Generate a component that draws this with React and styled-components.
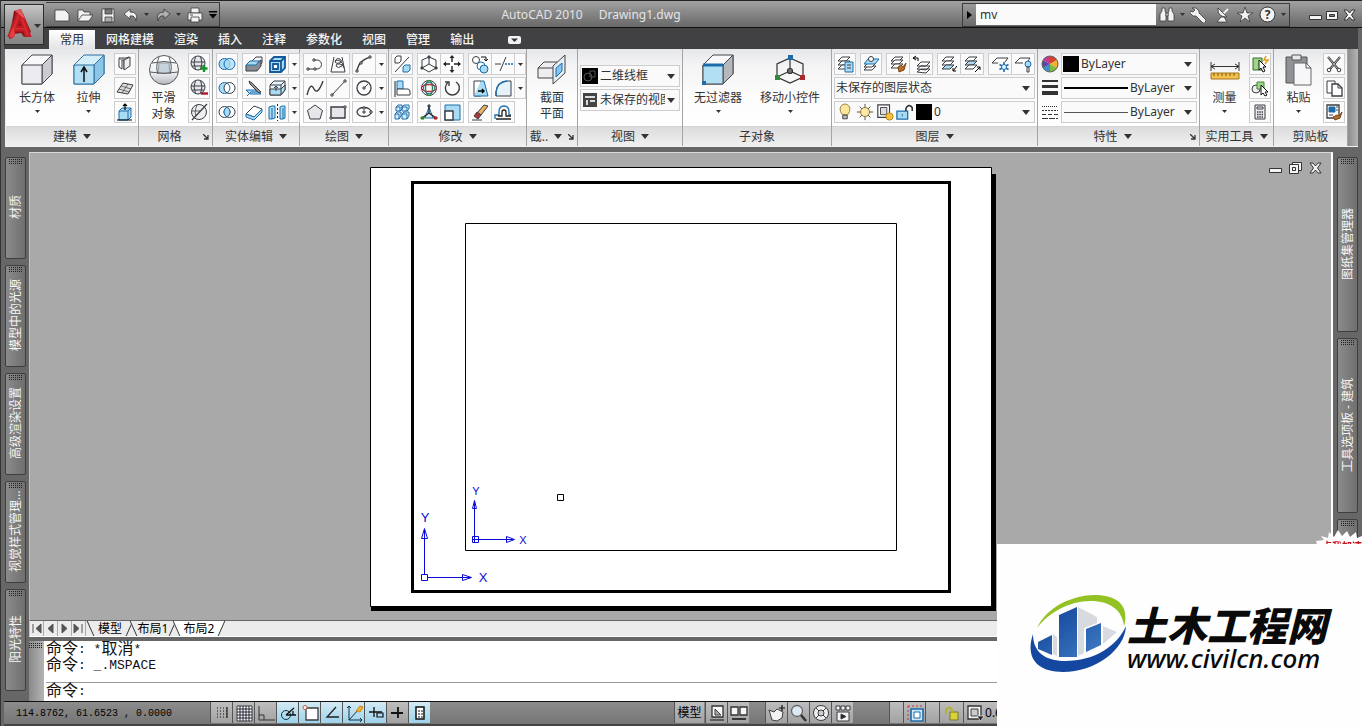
import React from 'react';
import styled, { createGlobalStyle } from 'styled-components';

const GlobalStyle = createGlobalStyle`
  *, *::before, *::after { box-sizing: border-box; }
  html, body { height: 100%; }
  body {
    margin: 0;
    background: #6a6a6a;
    font: 12px/16px "Noto Sans", "Noto Sans CJK SC", sans-serif;
    color: #333;
    overflow: hidden;
  }
  #root { height: 100%; }
  button, input, select {
    font: inherit;
    color: inherit;
    margin: 0;
    padding: 0;
    border: 0;
    background: none;
    border-radius: 0;
  }
  svg { display: block; flex: none; }
`;

const K = '#3a3d42';
const B = '#1c6cab';
const L = '#a9dbf4';

/* ---------- window frame ---------- */

const Window = styled.div`
  height: 100vh;
  min-height: 600px;
  display: flex;
  flex-direction: column;
  background: #676767;
  border-top: 1px solid #222;
  border-left: 1px solid #333;
`;

const TitleBar = styled.header`
  position: relative;
  height: 27px;
  flex: none;
  display: flex;
  align-items: center;
  padding: 1px 4px 0 45px;
  background: linear-gradient(#a2a2a2, #8a8a8a 40%, #686868);
  border-bottom: 1px solid #111;
`;

const AppButton = styled.button`
  position: absolute;
  left: 3px;
  top: 3px;
  width: 40px;
  height: 41px;
  border: 1px solid #2c2c2c;
  background: linear-gradient(#c6c6c6, #9a9a9a 50%, #858585);
  z-index: 2;
`;

const QuickAccess = styled.div`
  display: flex;
  align-items: center;
  width: 174px;
  height: 25px;
  padding-left: 4px;
  border: 1px solid #3b3b3b;
  border-left: 0;
`;

const QuickButton = styled.button`
  width: ${(p) => p.$w || 23}px;
  height: 22px;
  display: flex;
  align-items: center;
  justify-content: center;
`;

const Title = styled.h1`
  flex: 1;
  margin: 0;
  display: flex;
  justify-content: center;
  gap: 16px;
  font-size: 12px;
  font-weight: 400;
  color: #e4e4e4;
`;

const SearchBox = styled.form`
  display: flex;
  align-items: center;
  height: 24px;
  width: 328px;
  border: 1px solid #3b3b3b;
`;

const SearchInput = styled.input`
  width: 180px;
  height: 21px;
  padding: 0 4px;
  background: #fafafa;
  color: #333;
`;

const WindowButtons = styled.div`
  display: flex;
  gap: 4px;
  margin-left: 19px;
  width: 49px;
`;

const BareButton = styled.button`
  display: flex;
  align-items: center;
  justify-content: center;
`;

const TabRow = styled.nav`
  height: 21px;
  flex: none;
  display: flex;
  align-items: flex-end;
  margin: 0 4px 0 3px;
  padding-left: 45px;
  background: #414042;
`;

const RibbonTab = styled.button`
  height: 19px;
  padding: 0 ${(p) => (p.$active ? 11 : 10)}px;
  margin-right: ${(p) => (p.$active ? 1 : 0)}px;
  line-height: 19px;
  white-space: nowrap;
  font-weight: ${(p) => (p.$active ? 400 : 500)};
  color: ${(p) => (p.$active ? '#333' : '#f4f4f4')};
  background: ${(p) => (p.$active ? 'linear-gradient(#ffffff, #e4e4e4)' : 'none')};
`;

/* ---------- ribbon ---------- */

const Ribbon = styled.section`
  height: 98px;
  flex: none;
  display: flex;
  margin: 0 4px;
  padding-right: 10px;
  border-left: 1px solid #eee;
  border-bottom: 1px solid #f2f2f2;
  background: linear-gradient(90deg, #8d8d8d, #b4b4b4) right / 10px 100% no-repeat, #fafafa;
`;

const PanelBox = styled.section`
  width: ${(p) => p.$w}px;
  flex: ${(p) => (p.$grow ? '1 0 auto' : 'none')};
  display: flex;
  flex-direction: column;
  border-right: 1px solid #a4a4a4;
`;

const PanelBody = styled.div`
  flex: 1;
  display: flex;
  padding: 4px 0 0 ${(p) => p.$pad || 0}px;
  background: linear-gradient(#e6e7ea, #f4f4f5 22%, #fcfcfc 60%, #ffffff);
`;

const PanelFooter = styled.h2`
  margin: 0;
  height: 20px;
  display: flex;
  align-items: center;
  justify-content: center;
  position: relative;
  gap: 6px;
  padding-right: ${(p) => (p.$launcher ? 12 : 0)}px;
  border-top: 1px solid #d4d4d4;
  background: linear-gradient(#dcdcde, #f0f0f0);
  font-size: 12px;
  font-weight: 400;
  white-space: nowrap;
`;

const Launcher = styled.button`
  position: absolute;
  right: 3px;
  top: 7px;
`;

const BigButton = styled.button`
  width: ${(p) => p.$w}px;
  height: 70px;
  display: flex;
  flex-direction: column;
  align-items: center;
  white-space: nowrap;
  line-height: 16px;
`;

const BigIcon = styled.span`
  height: 37px;
  padding-top: 1px;
  display: flex;
  align-items: flex-start;
`;

const Caret = styled.span`
  margin-top: 4px;
`;

const Rows = styled.div`
  display: flex;
  flex-direction: column;
  gap: 2px;
  min-width: 0;
`;

const ViewRows = styled(Rows)`
  flex: 1;
  padding: 12px 2px 0 0;
`;

const LayerRows = styled(Rows)`
  flex: 1;
  padding-right: 2px;
`;

const Row = styled.div`
  display: flex;
  gap: ${(p) => p.$gap ?? 4}px;
`;

const Group = styled.div`
  display: flex;
`;

const Tool = styled.button`
  width: ${(p) => p.$w || 22}px;
  height: 22px;
  display: flex;
  align-items: center;
  justify-content: center;
  overflow: hidden;
  border: 1px solid #cdcdcf;
  background: #fbfbfb;
  & + & { margin-left: -1px; }
`;

const Combo = styled.label`
  position: relative;
  flex: ${(p) => (p.$h ? 'none' : 1)};
  min-width: 0;
  height: 22px;
  display: flex;
  align-items: center;
  padding-left: 1px;
  gap: 2px;
  border: 1px solid #cdcdcf;
  background: #fafafa;
  & > svg:last-child { position: absolute; right: 4px; top: 8px; }
`;

const Select = styled.select`
  flex: 1;
  min-width: 0;
  width: 0;
  height: 20px;
  margin-right: 14px;
  appearance: none;
  outline: none;
`;

const Swatch = styled.span`
  width: ${(p) => p.$s || 16}px;
  height: ${(p) => p.$s || 16}px;
  flex: none;
  background: #000;
`;

const LineSample = styled.span`
  width: 64px;
  height: ${(p) => p.$h}px;
  background: ${(p) => p.$c};
  margin-left: 1px;
`;

const RowIcon = styled.span`
  width: 22px;
  display: flex;
  align-items: center;
  justify-content: center;
`;

/* ---------- workspace ---------- */

const Workspace = styled.div`
  flex: 1;
  min-height: 0;
  display: flex;
  padding-top: 5px;
`;

const Dock = styled.aside`
  width: ${(p) => (p.$right ? 29 : 28)}px;
  flex: none;
  display: flex;
  flex-direction: column;
  gap: 6px;
  padding: 5px 4px 0;
  overflow: hidden;
`;

const DockTab = styled.button`
  height: ${(p) => p.$h}px;
  width: 21px;
  flex: none;
  display: flex;
  flex-direction: column;
  align-items: center;
  border: 1px solid #3e3e3e;
  border-radius: 2px;
  background: linear-gradient(90deg, #8b8b8b, #6f6f6f);
  color: #f6f6f6;
`;

const Grip = styled.span`
  width: 14px;
  height: 5px;
  flex: none;
  margin-top: 1px;
  background: repeating-linear-gradient(90deg, #222 0 1px, transparent 1px 2px) 0 0 / 14px 1px repeat-x,
    repeating-linear-gradient(90deg, #222 0 1px, transparent 1px 2px) 0 2px / 14px 1px repeat-x,
    repeating-linear-gradient(90deg, #222 0 1px, transparent 1px 2px) 0 4px / 14px 1px repeat-x;
`;

const DockText = styled.span`
  flex: 1;
  display: flex;
  align-items: center;
  justify-content: center;
  padding-top: 8px;
  writing-mode: vertical-rl;
  text-orientation: sideways;
  transform: rotate(180deg);
  white-space: nowrap;
`;

const Main = styled.main`
  flex: 1;
  min-width: 0;
  display: flex;
  flex-direction: column;
`;

const Canvas = styled.div`
  position: relative;
  flex: 1;
  min-height: 0;
  display: flex;
  justify-content: center;
  padding: 14px 0 0 5px;
  overflow: hidden;
  background: #a9a9a9;
  border-top: 1px solid #d8d8d8;
  border-left: 1px solid #c4c4c4;
  border-right: 2px solid #fff;
`;

const DocButtons = styled.div`
  position: absolute;
  top: 9px;
  right: 9px;
  display: flex;
  gap: 7px;
`;

const LayoutBar = styled.div`
  height: 17px;
  flex: none;
  display: flex;
  background: #ececec;
  border-top: 1px solid #666;
  border-bottom: 1px solid #fff;
  border-left: 1px solid #c4c4c4;
`;

const NavButton = styled.button`
  width: 14px;
  height: 15px;
  display: flex;
  align-items: center;
  justify-content: center;
  border-right: 1px solid #aaa;
`;

const LayoutTab = styled.button`
  position: relative;
  width: ${(p) => p.$w}px;
  margin-right: -5px;
  height: 15px;
  line-height: 15px;
  color: #000;
  z-index: ${(p) => (p.$active ? 2 : 1)};
  &::before, &::after {
    content: "";
    position: absolute;
    top: 0;
    bottom: 0;
    width: 60%;
    background: ${(p) => (p.$active ? '#fff' : '#ececec')};
  }
  &::before { left: 4px; border-left: 1px solid #333; transform: skewX(24deg); }
  &::after { right: 4px; border-right: 1px solid #333; transform: skewX(-24deg); }
  & > span { position: relative; z-index: 1; }
`;

const CommandArea = styled.div`
  height: 60px;
  flex: none;
  display: flex;
  margin-top: 4px;
  background: #fff;
`;

const CommandGrip = styled.div`
  width: 15px;
  flex: none;
  padding-top: 1px;
  background: linear-gradient(90deg, #8a8a8a, #b4b4b4);
`;

const CommandLog = styled.div`
  flex: 1;
  display: flex;
  flex-direction: column;
  padding: 1px 0 0 2px;
  font: 13px/16px "Liberation Mono", "Noto Sans CJK SC", monospace;
  color: #111;
`;

const LogLine = styled.div`
  height: 16px;
  display: flex;
  align-items: center;
  white-space: pre;
`;

const Prompt = styled.label`
  height: 19px;
  display: flex;
  align-items: center;
  margin-top: 8px;
  border-top: 1px solid #9a9a9a;
  input { flex: 1; outline: none; }
`;

const Han = styled.span`
  font-size: 16px;
`;

/* ---------- status bar ---------- */

const StatusBar = styled.footer`
  height: 25px;
  flex: none;
  display: flex;
  margin-left: 3px;
  padding-right: 359px;
  border-top: 1px solid #111;
  border-bottom: 2px solid #444;
  background: linear-gradient(#8c8c8c, #757575);
`;

const Coordinates = styled.output`
  width: 206px;
  padding-left: 12px;
  font: 10px/23px "Liberation Mono", monospace;
  color: #000;
  white-space: pre;
`;

const StatusButton = styled.button`
  width: ${(p) => p.$w || 22}px;
  height: 21px;
  display: flex;
  align-items: center;
  justify-content: center;
  white-space: nowrap;
  color: #000;
  border-left: 1px solid #555;
  background: ${(p) => (p.$on ? 'linear-gradient(#d4eaf4, #9cd3ea)' : 'linear-gradient(#bdbdbd, #a2a2a2)')};
`;

const StatusGroup = styled.div`
  display: flex;
  margin-left: ${(p) => p.$ml}px;
`;

const Spacer = styled.div`
  flex: 1;
`;

/* ---------- site banner ---------- */

const Banner = styled.a`
  position: fixed;
  right: 0;
  bottom: 0;
  width: 365px;
  height: 182px;
  z-index: 10;
  display: flex;
  align-items: center;
  padding: 0 0 2px 32px;
  background: #fefefe;
  color: #0a0a0a;
  text-decoration: none;
`;

const BannerText = styled.span`
  display: flex;
  flex-direction: column;
  padding-top: 8px;
  white-space: nowrap;
`;

const BannerName = styled.strong`
  font: italic 900 40px/40px "Noto Sans CJK SC", sans-serif;
`;

const BannerUrl = styled.span`
  font: italic 500 26px/28px "Noto Sans", sans-serif;
`;

const Badge = styled.span`
  position: fixed;
  right: 0;
  bottom: 172px;
  z-index: 9;
`;

/* ---------- drawings ---------- */

const quad = (y, fill = '#fff') => <path d={`M3 ${y + 4}L7 ${y}H15L11 ${y + 4}Z`} fill={fill} />;

const ICONS = {
  polysolid: <g><path d="M4 4v9l3 2V6z" fill="#fff" /><path d="M4 4h7l3-1v9l-5 3V6H7" fill="#ddd" /><path d="M9 6v10l6-4V3z" fill="#eee" /></g>,
  planar: <g><path d="M2 14L8 5l10 2-5 9z" fill="#ddd" /><path d="M6 8l10 3M4 11l10 3M13 6L7 15" strokeWidth=".7" /></g>,
  presspull: <g><path d="M4 9l3-3h9v9l-3 3H4z" fill={L} stroke={B} /><path d="M4 9h9v9M13 9l3-3" stroke={B} /><path d="M2 18h15M10 8V2M8 4l2-2 2 2" stroke="#000" strokeWidth="1.200" /></g>,
  smoothMore: <g><circle cx="9" cy="9" r="7" fill="#e6e6ea" /><path d="M2 8h14M3 12h12M6.500 2.500q-3 6 0 13M11.500 2.500q3 6 0 13" /><path d="M15 11v7M11.500 14.500h7" stroke="#16922b" strokeWidth="2.400" /></g>,
  smoothLess: <g><circle cx="9" cy="9" r="7" fill="#e6e6ea" /><path d="M2 8h14M3 12h12M6.500 2.500q-3 6 0 13M11.500 2.500q3 6 0 13" /><path d="M12 15.500h7" stroke="#b0152a" strokeWidth="2.400" /></g>,
  refine: <g><circle cx="10" cy="10" r="7.500" fill="#eee" /><path d="M3 18L18 2" strokeWidth="1.300" /><path d="M3 9h8M8 3q-3 7-1 11" strokeWidth=".8" /></g>,
  union: <g stroke={B}><circle cx="7.500" cy="10" r="5.500" fill={L} /><circle cx="12.500" cy="10" r="5.500" fill={L} fillOpacity=".7" /></g>,
  subtract: <g><circle cx="7.500" cy="10" r="5.500" fill={L} stroke={B} /><circle cx="12.500" cy="10" r="5.500" fill="#fff" /><path d="M10 5.100a5.500 5.500 0 010 9.800" stroke={B} /></g>,
  intersect: <g><circle cx="7.500" cy="10" r="5.500" /><circle cx="12.500" cy="10" r="5.500" /><path d="M10 5.100a5.500 5.500 0 010 9.800 5.500 5.500 0 010-9.800z" fill={L} stroke={B} /></g>,
  interfere: <g><path d="M8 7l4-4h6v6l-4 4H8z" fill="#f2f6fa" /><path d="M2 11l3-3h9l3-2v6l-4 5H2z" fill="#888c90" /><path d="M2 11l4-4h9l-3 4z" fill={L} stroke={B} /></g>,
  slice: <g><path d="M2 12h9l6 4H6z" fill={L} stroke={B} /><path d="M5 3l3 2 9 9-2 1-9-9z" fill="#999" /><path d="M3 18l4-4h7" stroke={B} /></g>,
  thicken: <g><path d="M2 12l8-8 8 3-8 8z" fill="#fff" /><path d="M2 12v3l8 3 8-8V7l-8 8z" fill={L} stroke={B} /></g>,
  shell: <g stroke="#135a9a" strokeWidth="1.800"><path d="M3 7l4-4h11v11l-4 4H3z" fill={L} /><path d="M3 7h11v11M14 7l4-4" /><path d="M6 10h5v5H6z" fill="#fff" /></g>,
  imprint: <g><path d="M3 7l4-4h11v9l-4 5H3z" fill="#e5f4fc" /><path d="M3 11h11l4-4v5l-4 5H3z" fill={L} /><path d="M3 7h11v10M14 7l4-4M9 13V8M7 10l2-2 2 2" /></g>,
  separate: <g stroke={B}><path d="M2 5l3-1h3v12l-3 1H2zM13 5l2-1h3v12l-2 1h-3z" fill={L} /><path d="M5 6v11M16 6v11" /><path d="M10.500 2v17" stroke="#222" strokeDasharray="2 2" /></g>,
  polyline: <g><path d="M3 15h9a4.500 4.500 0 000-9H9" /><path d="M2 14h2v2H2zM9 14h2v2H9zM8 5h2v2H8z" fill="#fff" /></g>,
  helix: <g><path d="M6 3L3 18h14L14 3" /><path d="M7 7q2-4 5-2t0 4q-4 1-5-1 1-3 5-1t2 5q-4 3-6 0 0-3 4-2t4 4" /></g>,
  arc: <g><path d="M3 18Q4 6 17 3" strokeWidth="1.300" /><path d="M2 16h2v2H2zM6 8h2v2H6zM15 2h2v2h-2z" fill="#fff" /></g>,
  spline: <path d="M2 17C5 6 7 7 9 11S14 14 18 3" strokeWidth="1.400" />,
  line: <g><path d="M4 17L17 3" /><path d="M3 16h2v2H3zM16 2h2v2h-2z" fill="#fff" /></g>,
  circle: <g><circle cx="10" cy="10" r="7" strokeWidth="1.300" /><path d="M10 10l4-4" /><path d="M9 9h2v2H9z" fill="#fff" /></g>,
  polygon: <path d="M10 3l7.500 5.500L15 17H5L2.500 8.500z" fill="#e6e6ea" />,
  rectangle: <g><path d="M3 5h14v11H3z" fill="#e6e6ea" strokeWidth="1.400" /><path d="M2 15h2v2H2zM16 4h2v2h-2z" fill="#fff" /></g>,
  ellipse: <g><ellipse cx="10" cy="10" rx="7" ry="4.500" strokeWidth="1.300" /><path d="M9 9h2v2H9zM16 9h2v2h-2zM9 5h2v2H9z" fill="#fff" /></g>,
  align3d: <g><path d="M3 4l2-2h4v5L7 9H3z" fill="#fff" /><path d="M3 18L17 3" /><path d="M11 13l2-2h5v5l-2 2h-5z" fill={L} stroke={B} /></g>,
  gizmo: <g><path d="M10 3l7 3v8l-7 4-7-4V6zM10 10V3M10 10l7 4M10 10l-7 4" /><path d="M9 2h2v2H9z" fill={B} /><path d="M16 13h2v2h-2z" fill="#a22" /><path d="M2 13h2v2H2z" fill="#282" /></g>,
  move: <g><path d="M10 3v5M10 12v5M3 10h5M12 10h5" stroke="#222" strokeWidth="1.400" /><path d="M10 1l2.500 3h-5zM10 19l2.500-3h-5zM1 10l3-2.500v5zM19 10l-3-2.500v5z" fill="#222" stroke="none" /></g>,
  copy: <g><circle cx="6" cy="6" r="3.500" fill="#fff" /><circle cx="11" cy="12" r="4" fill="#fff" stroke={B} /><circle cx="14" cy="15" r="4" fill={L} stroke={B} /><path d="M11 3h5v4M14 5l2 2 2-2" stroke="#111" /></g>,
  trim: <g><path d="M2 10h6M7 17L13 3" /><path d="M12 10h8" stroke={B} strokeDasharray="2 1" strokeWidth="1.300" /></g>,
  alignTool: <g><path d="M3 3v16" stroke="#222" /><path d="M5 3h6v8H5z" fill={L} stroke={B} /><path d="M5 11h11q2 0 2 3v3H5z" fill="#fff" /></g>,
  orbit: <g><circle cx="10" cy="10" r="7.500" /><ellipse cx="10" cy="10" rx="3.500" ry="7.500" stroke="#2a8a3a" strokeWidth="1.300" /><ellipse cx="10" cy="10" rx="7.500" ry="3.500" stroke="#b33" strokeWidth="1.300" /><circle cx="10" cy="10" r="5.500" stroke={B} /></g>,
  rotate: <g><path d="M6 4.500a7 7 0 108-.5" strokeWidth="1.400" /><path d="M3 4h4v4" strokeWidth="1.400" /></g>,
  stretch: <g><path d="M4 3h7v15H4z" fill="#fff" /><path d="M11 3h3l4 15H4" fill={L} stroke={B} /><path d="M8 13h6M12 11l2 2-2 2" stroke="#000" strokeWidth="1.400" /></g>,
  fillet: <g><path d="M3 18V14Q4 4 14 3h4v15z" fill="#e6f2fa" /><path d="M3 18V14Q4 4 14 3" stroke={B} strokeWidth="1.400" /></g>,
  array: <g stroke={B}><path d="M4 5l2-2h4v4L8 9H4zM10 5l2-2h5v4l-2 2h-5zM3 12l2-2h4v4l-2 3H3zM10 12l2-2h5v4l-2 3h-5z" fill="#d6eefa" /><path d="M4 5h4v4M10 5h5v4M3 12h4v5M10 12h5v5" /></g>,
  gizmo3: <g><path d="M10 5L6 16h8z" fill="#d6eefa" stroke={B} /><path d="M10 11V4M10 11l7 5M10 11l-7 5" stroke="#222" strokeWidth="1.300" /><path d="M9 3h2v2H9z" fill={B} /><path d="M15 15h3v2h-3z" fill="#a22" stroke="#a22" /><path d="M2 15h3v2H2z" fill="#282" stroke="#282" /></g>,
  scale: <g><path d="M3 3h15v15H3z" fill={L} stroke={B} /><path d="M3 9h8v9H3z" fill="#fff" strokeWidth="1.400" /></g>,
  erase: <g><path d="M7 11l7-8 4 1-7 9z" fill="#e8b063" /><path d="M4 14l3-4 4 3-3 4z" fill="#b4343c" /><path d="M2 18h10" /></g>,
  offset: <g strokeWidth="1.300"><path d="M2 17v-4h4v-3q0-6 5-6t5 6v3h2" stroke={B} /><path d="M3 17h15M5 14h4v-4q0-2 2-2t2 2v4h5" stroke="#222" /></g>,
  layerProps: <g>{quad(3)}{quad(7)}{quad(11)}<path d="M10 8h8v10h-8z" fill={L} stroke={B} /><path d="M12 11h4M12 14h4" /></g>,
  layerCurrent: <g>{quad(12)}{quad(9)}<path d="M3 10l4-5h11l-4 5z" fill={L} stroke={B} /><circle cx="10" cy="5" r="2.500" fill="#fff" /></g>,
  layerMatch: <g>{quad(3)}{quad(6)}{quad(10)}<path d="M10 13l3-2 2 2 3-4-2 7-5 2z" fill="#b4702a" stroke="#7c4514" /></g>,
  layerPrev: <g><path d="M6 12l4-4h9l-4 4zM6 15l4-3h9l-4 4zM6 18l4-3h9l-4 4z" fill="#fff" /><path d="M2 4h5v3M5 2L2 4l3 2" stroke="#000" /></g>,
  layerIso: <g>{quad(3)}{quad(7)}{quad(11, L)}<path d="M18 12l-4 5M14 14v3h3" stroke="#000" /></g>,
  layerUniso: <g>{quad(3)}{quad(7, L)}{quad(11)}<path d="M13 18l5-5M15 13h3v3" stroke="#000" /></g>,
  layerFreeze: <g><path d="M2 9l5-5h11l-3 4" fill="#fff" /><path d="M2 9h6" /><path d="M14 8v10M9.500 10.500l9 5M18.500 10.500l-9 5" stroke={B} strokeWidth="1.600" /><circle cx="14" cy="13" r="2.500" fill="#e6f6ff" stroke={B} /></g>,
  layerOff: <g><path d="M2 9l5-5h10l-2 3" fill="#fff" /><path d="M2 9h8" /><circle cx="15" cy="10" r="3" fill={L} stroke={B} /><path d="M14 13h2v5h-2z" fill="#fff" /></g>,
  select: <g><path d="M3 4h9v12H3z" fill="#9ed686" stroke="#3b6b2d" /><path d="M16 2l-2 4h4l-3 4" stroke="#e0a01c" strokeWidth="1.600" /><path d="M9 6v10l2-2 2 4 2-1-2-4h3z" fill="#fff" stroke="#111" /></g>,
  selectAll: <g><circle cx="6" cy="11" r="4" fill="#eee" /><path d="M7 4h7v7H7z" fill="#9ed686" stroke="#3b8b2d" /><path d="M11 7v10l2-2 2 3 2-1-2-3h3z" fill="#fff" stroke="#111" /></g>,
  calc: <g><path d="M5 3h10v14H5z" fill="#eee" /><path d="M7 5h6v2H7z" fill="#fff" /><path d="M7 10h6M7 12.500h6M7 15h6" strokeDasharray="1.500 .8" strokeWidth="1.500" /></g>,
  cut: <g><path d="M4 3l10 12M16 3L6 15" stroke="#333" strokeWidth="2.200" /><path d="M4 3l10 12M16 3L6 15" stroke="#eee" strokeWidth=".7" /><circle cx="5" cy="16" r="1.800" /><circle cx="15" cy="16" r="1.800" /></g>,
  duplicate: <g><path d="M3 3h8v12H3z" fill="#fff" /><path d="M8 6h6l4 4v8H8z" fill="#fff" strokeWidth="1.300" /><path d="M14 6v4h4" /></g>,
  matchProps: <g><path d="M3 3h12v13H3z" fill="#fff" strokeWidth="1.300" /><path d="M5 5h6v5H5z" fill={B} stroke={B} /><path d="M12 5h2M12 8h2M5 13h4" /><path d="M9 15l4-2 2 1 3-4-2 6-5 2z" fill="#b4702a" stroke="#7c4514" /></g>,
  snap: <g stroke="#111" strokeDasharray="1 2"><path d="M5 5h10M5 8h10M5 11h10M5 14h10" /><path d="M15 4v11" strokeDasharray="none" /></g>,
  grid: <g><path d="M3 3h15v15H3z" fill="#fff" /><path d="M6 3v15M9 3v15M12 3v15M15 3v15M3 6h15M3 9h15M3 12h15M3 15h15" stroke="#223" /></g>,
  ortho: <path d="M3 3v14h16M3 12h5v5" stroke="#333" />,
  polar: <g><circle cx="8" cy="12" r="4.500" stroke="#134" /><path d="M8 12h10M8 12l8-7M15 8v4" stroke="#111" strokeWidth="1.300" /></g>,
  osnap: <g><path d="M6 5h12v12H6z" fill="#fff" strokeWidth="1.300" /><circle cx="5" cy="4.500" r="2" fill="#fff" stroke="#c53" /></g>,
  track: <path d="M14 4L5 14h12" stroke="#222" strokeWidth="1.300" />,
  ducs: <g><path d="M5 3v14h13M5 17L15 6M3 5l2-2 2 2M16 15l2 2-2 2" stroke="#134" /><path d="M16 3l-4 5 4 1 3-5z" fill="#f3b431" stroke="#c98514" /></g>,
  dyn: <g stroke="#111"><path d="M3 9h13M8 4v10" strokeWidth="1.300" /><path d="M11 10h6v4h-6z" fill={L} strokeWidth="1.200" /></g>,
  lwt: <path d="M3 10h12M10 4v11" stroke="#111" strokeWidth="1.800" />,
  qp: <g><path d="M6 4h8v12H6z" fill="#fff" stroke="#111" strokeWidth="1.500" /><path d="M8 8h2M11 8h2M8 11h2M11 11h2M8 14h2M11 14h2" stroke="#111" /></g>,
  modelSpace: <g><path d="M5 3h11v11H5z" fill="#f6f6f6" stroke="#333" strokeWidth="1.300" /><path d="M8 6v6h6z" fill="#aaa" /><path d="M3 17h14" stroke="#111" /></g>,
  layouts: <g><path d="M2 4h7v8H2zM11 4h7v8h-7z" fill="#f6f6f6" stroke="#333" strokeWidth="1.300" /><path d="M3 16h14" stroke="#111" strokeWidth="1.500" /></g>,
  pan: <g><path d="M2 7l5 2 3-3 2 1 4 2-1 6-5 3-5-1z" fill="#f2f2f2" /><path d="M15 2v6M12 5h6" stroke="#111" strokeWidth="1.200" /></g>,
  zoomIcon: <g><circle cx="8" cy="8" r="5.500" fill="#dce8f4" stroke="#666" strokeWidth="1.300" /><path d="M12 12l5 6" stroke="#333" strokeWidth="2.500" /></g>,
  wheel: <g><circle cx="10" cy="10" r="7.500" fill="#eee" /><circle cx="10" cy="10" r="3" fill="#ccc" /><path d="M5 5l3 3M15 5l-3 3M5 15l3-3M15 15l-3-3" /></g>,
  motion: <g><path d="M3 3h4v4H3zM8 3h4v4H8zM13 3h4v4h-4zM4 9h12v9H4z" fill="#f2f2f2" /><path d="M8 11v5l5-2.500z" fill="#222" /></g>,
  annoScale: <g><path d="M3 3v16M3 3h16" stroke="#c33" strokeDasharray="2 2" /><path d="M6 6h12v12H6z" fill="#cfe6f8" stroke={B} strokeWidth="1.600" /><path d="M9 9h6v6H9z" fill="#fff" stroke={B} /></g>,
  lock: <g><path d="M8 9h8v8H8z" fill="#d8d337" stroke="#77762a" /><path d="M4 11V7q3-5 6 0v2" stroke="#b5b22e" strokeWidth="2" /></g>,
  screen: <g><path d="M3 3h13v13H3z" fill="#f2f2f2" stroke="#333" strokeWidth="1.300" /><path d="M6 6h7v7H6z" fill="#ccc" /><path d="M12 13h7l-3.500 5z" fill="#222" stroke="#fff" strokeWidth=".6" /></g>,
  bulb: <g><path d="M7 13q-5-7 0-11 3-2 6 0 5 4 0 11z" fill="#fbe69a" stroke="#8a7a3a" /><path d="M7.500 13.500h5v4h-5z" fill="#bbb" /></g>,
  sun: <g><path d="M10 1v18M1 10h18M4 4l12 12M16 4L4 16" stroke="#444" /><circle cx="10" cy="10" r="5" fill="#fbe9a8" stroke="#8a6a2a" /></g>,
  vpFreeze: <g><path d="M2 2h13v14H2z" fill="#fff" strokeWidth="1.300" /><path d="M5 5h7v8H5z" fill="#ddd" /><circle cx="15" cy="15" r="4" fill="#f6c33d" stroke="#b97a12" /></g>,
  unlock: <g><path d="M1 9h12v9H1z" fill={L} stroke={B} strokeWidth="1.400" /><path d="M11 9V6q3-6 7-1v4" stroke="#222" strokeWidth="1.600" /><path d="M7 12v3" stroke={B} /></g>,
};

function Icon({ name, size = 20 }) {
  return (
    <svg width={size} height={size} viewBox="0 0 20 20" fill="none" stroke={K} strokeWidth="1" aria-hidden="true">
      {ICONS[name]}
    </svg>
  );
}

function Arrow({ small }) {
  return small ? (
    <svg width="5" height="3" viewBox="0 0 5 3"><path d="M0 0h5L2.500 3z" fill="#333" /></svg>
  ) : (
    <svg width="8" height="5" viewBox="0 0 8 5"><path d="M0 0h8L4 5z" fill="#333" /></svg>
  );
}

const glyphStroke = { stroke: '#3a3a3a', strokeWidth: 0.8, fill: '#f2f2f2' };

const QuickIcon = {
  new: <path d="M1 3h10l4 4v7H1z" {...glyphStroke} />,
  open: <g {...glyphStroke}><path d="M1 14V3h5l1 2h6v3" /><path d="M1 14l4-6h11l-4 6z" /></g>,
  save: <g {...glyphStroke}><path d="M2 2h12v13H2z" /><path d="M5 2h7v5H5z" fill="#777" /><path d="M5 10h7v5H5z" fill="#aaa" /></g>,
  undo: <path d="M7 2L1 7l6 5V9q5-1 6 5 3-9-6-9z" {...glyphStroke} />,
  redo: <path d="M9 2l6 5-6 5V9Q4 8 3 14 0 5 9 5z" {...glyphStroke} fill="#b0b0b0" />,
  print: <g {...glyphStroke}><path d="M4 1h8v5H4z" /><path d="M1 6h14v7H1z" /><path d="M4 10h8v5H4z" /><path d="M3 8h3" stroke="#222" /></g>,
  find: <g {...glyphStroke}><path d="M3 1h3v3l1 2v8H1V7l2-3zM10 1h3v3l2 3v7H9V6l1-2z" /><path d="M7 6h2v3H7z" /></g>,
  key: <path d="M2 1h4l3 3v2l7 7-1 3h-2L6 9H3L0 6V4l3 1 2-2z" {...glyphStroke} />,
  dish: <g {...glyphStroke}><path d="M9 7l5-5" stroke="#f2f2f2" strokeWidth="1.800" /><path d="M4 1Q3 10 13 10L4 1z" /><path d="M7 10l-4 5h10l-3-5z" /></g>,
  star: <path d="M8 0l2 6h6l-5 3 2 6-5-4-5 4 2-6-5-3h6z" {...glyphStroke} />,
};

function Quick({ name, label, w }) {
  return (
    <QuickButton type="button" $w={w} aria-label={label}>
      <svg width="16" height="16" viewBox="0 0 16 16">{QuickIcon[name]}</svg>
    </QuickButton>
  );
}

function BoxIcon({ blue, filter }) {
  return (
    <svg width="32" height="32" viewBox="0 0 32 32" fill="none" stroke={blue ? '#2e6f9c' : '#44474c'}>
      <path d="M1 11L11 1h20v19L21 30H1z" fill={blue ? '#d4edf9' : '#f8f8fa'} />
      <path d="M21 11L31 1v19L21 30z" fill={blue ? '#8cc6e6' : filter ? '#b4b7bc' : '#cbccd2'} />
      <path d="M1 11h20v19H1z" fill={blue || filter ? '#b2dff4' : '#ebebf0'} />
      {blue && <path d="M11 28V14M8 18l3-5 3 5" stroke="#111" strokeWidth="1.500" />}
      {filter && <g><path d="M1 11h20" stroke={B} strokeWidth="3" /><path d="M0 27h4v4H0z" fill={B} stroke="none" /></g>}
    </svg>
  );
}

function SphereIcon() {
  return (
    <svg width="32" height="32" viewBox="0 0 32 32" fill="none" stroke="#555a60">
      <defs><linearGradient id="ball" x1="0" y1="0" x2="0" y2="1"><stop offset="0" stopColor="#fff" /><stop offset=".6" stopColor="#eeeff2" /><stop offset="1" stopColor="#b4b6bc" /></linearGradient></defs>
      <circle cx="16" cy="16" r="14.500" fill="url(#ball)" />
      <path d="M11 9h10l1 10H10z" fill="#a9bccb" opacity=".6" />
      <path d="M4 9q12-3 24 0M2 18q14 3 28 0M11 3q-4 10-1 17M21 3q4 10 1 17" />
    </svg>
  );
}

function SectionIcon() {
  return (
    <svg width="30" height="32" viewBox="0 0 30 32" fill="none" stroke="#444">
      <path d="M1 14l6-6h14v11l-4 5H1z" fill="#eeeef2" />
      <path d="M1 14h15" />
      <path d="M16 12L28 1v18L16 30z" fill="#e4eef4" />
      <path d="M19 14l6-5v8l-6 6z" fill="#84c5ea" stroke={B} />
    </svg>
  );
}

function MoveGizmoIcon() {
  return (
    <svg width="32" height="32" viewBox="0 0 32 32" fill="none" stroke="#333" strokeWidth="1.200">
      <path d="M16 4l13 6v13l-13 6-13-6V10zM16 4v13l13 6M16 17L3 23" />
      <path d="M14 1h5v5h-5z" fill={B} stroke="none" /><path d="M26 21h5v5h-5z" fill="#a92a2a" stroke="none" />
      <path d="M1 21h5v5H1z" fill="#2c8a38" stroke="none" /><circle cx="16" cy="17" r="2.500" fill="#777" />
    </svg>
  );
}

function MeasureIcon() {
  return (
    <svg width="30" height="32" viewBox="0 0 30 32" fill="none" stroke="#333">
      <path d="M1 8v9M29 8v9M1 12.500h28M5 10l-4 2.500L5 15M25 10l4 2.500L25 15" />
      <path d="M1 19h28v6H1z" fill="#f2c14e" stroke="#a5761c" /><path d="M4 19v3M8 19v3M12 19v3M16 19v3M20 19v3M24 19v3" stroke="#7a5412" />
    </svg>
  );
}

function PasteIcon() {
  return (
    <svg width="27" height="32" viewBox="0 0 27 32" fill="none" stroke="#555">
      <path d="M1 3h21v26H1z" fill="#8f9296" /><path d="M7 1h9v5H7z" fill="#e8e8e8" />
      <path d="M9 9h12l5 5v17H9z" fill="#f7f7f9" stroke="#666" /><path d="M21 9v5h5" />
    </svg>
  );
}

function ColorWheel() {
  const hues = ['#d8402e', '#f0b02c', '#7dbb3c', '#3f8fc8', '#5a48a8', '#c23a8a'];
  const pts = [[9, 1], [16, 5], [16, 13], [9, 17], [2, 13], [2, 5]];
  return (
    <svg width="18" height="18" viewBox="0 0 18 18">
      {hues.map((c, i) => {
        const [x, y] = pts[i];
        const [u, v] = pts[(i + 1) % 6];
        return <path key={c} d={`M9 9L${x} ${y}A8 8 0 01${u} ${v}Z`} fill={c} />;
      })}
      <circle cx="9" cy="9" r="8" fill="none" stroke="#666" />
    </svg>
  );
}

function Panel({ title, w, pad, arrow, launcher, grow, children }) {
  return (
    <PanelBox $w={w} $grow={grow}>
      <PanelBody $pad={pad}>{children}</PanelBody>
      <PanelFooter $launcher={launcher}>
        {title}
        {arrow && <Arrow />}
        {launcher && (
          <Launcher type="button" aria-label={`${title} 设置`}>
            <svg width="6" height="6" viewBox="0 0 6 6"><path d="M0 0l5 5M5 1v4H1" stroke="#333" fill="none" strokeWidth="1.300" /></svg>
          </Launcher>
        )}
      </PanelFooter>
    </PanelBox>
  );
}

function Big({ icon, lines, w, arrow }) {
  return (
    <BigButton type="button" $w={w}>
      <BigIcon>{icon}</BigIcon>
      {lines.map((t) => <span key={t}>{t}</span>)}
      {arrow && <Caret><Arrow small /></Caret>}
    </BigButton>
  );
}

function Tools({ items, w }) {
  return (
    <Group>
      {items.map((n, i) => n === 'v'
        ? <Tool key={i} type="button" $w={12} aria-label="更多"><Arrow small /></Tool>
        : <Tool key={i} type="button" $w={w} aria-label={n}><Icon name={n} /></Tool>)}
    </Group>
  );
}

function Dropdown({ label, value, children, fixed }) {
  return (
    <Combo $h={fixed}>
      {children}
      <Select aria-label={label} defaultValue={value}><option>{value}</option></Select>
      <Arrow />
    </Combo>
  );
}

const TABS = ['常用', '网格建模', '渲染', '插入', '注释', '参数化', '视图', '管理', '输出'];

function RibbonPanels() {
  return (
    <Ribbon>
      <Panel title="建模" w={133} pad={5} arrow>
        <Big icon={<BoxIcon />} lines={['长方体']} w={52} arrow />
        <Big icon={<BoxIcon blue />} lines={['拉伸']} w={51} arrow />
        <Rows><Tools items={['polysolid']} /><Tools items={['planar']} /><Tools items={['presspull']} /></Rows>
      </Panel>
      <Panel title="网格" w={74} pad={0} launcher>
        <Big icon={<SphereIcon />} lines={['平滑', '对象']} w={49} />
        <Rows><Tools items={['smoothMore']} /><Tools items={['smoothLess']} /><Tools items={['refine']} /></Rows>
      </Panel>
      <Panel title="实体编辑" w={87} pad={3} arrow>
        <Rows>
          <Row><Tools items={['union']} /><Tools items={['interfere', 'shell', 'v']} w={24} /></Row>
          <Row><Tools items={['subtract']} /><Tools items={['slice', 'imprint', 'v']} w={24} /></Row>
          <Row><Tools items={['intersect']} /><Tools items={['thicken', 'separate', 'v']} w={24} /></Row>
        </Rows>
      </Panel>
      <Panel title="绘图" w={89} pad={3} arrow>
        <Rows>
          <Row $gap={2}><Tools items={['polyline', 'helix']} w={24} /><Tools items={['arc', 'v']} w={24} /></Row>
          <Row $gap={2}><Tools items={['spline', 'line']} w={24} /><Tools items={['circle', 'v']} w={24} /></Row>
          <Row $gap={2}><Tools items={['polygon', 'rectangle']} w={24} /><Tools items={['ellipse', 'v']} w={24} /></Row>
        </Rows>
      </Panel>
      <Panel title="修改" w={138} pad={2} arrow>
        <Rows>
          <Row><Tools items={['align3d']} /><Tools items={['gizmo', 'move']} w={24} /><Tools items={['copy', 'trim', 'v']} w={24} /></Row>
          <Row><Tools items={['alignTool']} /><Tools items={['orbit', 'rotate']} w={24} /><Tools items={['stretch', 'fillet', 'v']} w={24} /></Row>
          <Row><Tools items={['array']} /><Tools items={['gizmo3', 'scale']} w={24} /><Tools items={['erase', 'offset']} w={24} /></Row>
        </Rows>
      </Panel>
      <Panel title="截.." w={51} arrow launcher>
        <Big icon={<SectionIcon />} lines={['截面', '平面']} w={50} />
      </Panel>
      <Panel title="视图" w={105} pad={2} arrow>
        <ViewRows>
          <Dropdown label="视觉样式" value="二维线框" fixed>
            <svg width="16" height="16" viewBox="0 0 16 16" fill="none" stroke="#555"><path d="M0 0h16v16H0z" fill="#000" stroke="none" /><circle cx="6" cy="9" r="4" /><path d="M8 3h5v6H8z" /></svg>
          </Dropdown>
          <Dropdown label="视图" value="未保存的视图" fixed>
            <svg width="16" height="16" viewBox="0 0 16 16"><path d="M1 1h14v14H1z" fill="#444" /><path d="M3 4h10v2H3zM4 8h2v5H4zM8 8h5v2H8z" fill="#ddd" /></svg>
          </Dropdown>
        </ViewRows>
      </Panel>
      <Panel title="子对象" w={149}>
        <Big icon={<BoxIcon filter />} lines={['无过滤器']} w={70} arrow />
        <Big icon={<MoveGizmoIcon />} lines={['移动小控件']} w={74} arrow />
      </Panel>
      <Panel title="图层" w={206} pad={2} arrow>
        <LayerRows>
          <Row>
            <Tools items={['layerProps']} /><Tools items={['layerCurrent']} /><Tools items={['layerMatch', 'layerPrev']} w={24} />
            <Tools items={['layerIso', 'layerUniso']} w={24} /><Tools items={['layerFreeze', 'layerOff']} w={24} />
          </Row>
          <Dropdown label="图层状态" value="未保存的图层状态" fixed />
          <Dropdown label="图层" value="0" fixed>
            <Icon name="bulb" size={18} /><Icon name="sun" size={18} /><Icon name="vpFreeze" size={18} /><Icon name="unlock" size={18} />
            <Swatch />
          </Dropdown>
        </LayerRows>
      </Panel>
      <Panel title="特性" w={162} pad={1} arrow launcher>
        <LayerRows>
          <Row $gap={0}><RowIcon><ColorWheel /></RowIcon><Dropdown label="对象颜色" value="ByLayer"><Swatch /></Dropdown></Row>
          <Row $gap={0}>
            <RowIcon><svg width="16" height="18" viewBox="0 0 16 18" fill="#333"><path d="M0 1h16v2H0zM0 6h16v3H0zM0 12h16v4H0z" /></svg></RowIcon>
            <Dropdown label="线宽" value="ByLayer"><LineSample $h={2} $c="#000" /></Dropdown>
          </Row>
          <Row $gap={0}>
            <RowIcon><svg width="16" height="16" viewBox="0 0 16 16" fill="none" stroke="#333"><path d="M0 2.500h16" strokeDasharray="1 1" /><path d="M0 6.500h16" strokeDasharray="2 1" /><path d="M0 10.500h16" strokeDasharray="4 2" /><path d="M0 14.500h16" strokeDasharray="6 1" /></svg></RowIcon>
            <Dropdown label="线型" value="ByLayer"><LineSample $h={1} $c="#555" /></Dropdown>
          </Row>
        </LayerRows>
      </Panel>
      <Panel title="实用工具" w={74} arrow>
        <Big icon={<MeasureIcon />} lines={['测量']} w={49} arrow />
        <Rows><Tools items={['select']} /><Tools items={['selectAll']} /><Tools items={['calc']} /></Rows>
      </Panel>
      <Panel title="剪贴板" w={73} grow>
        <Big icon={<PasteIcon />} lines={['粘贴']} w={49} arrow />
        <Rows><Tools items={['cut']} /><Tools items={['duplicate']} /><Tools items={['matchProps']} /></Rows>
      </Panel>
    </Ribbon>
  );
}

function Paper() {
  return (
    <svg width="626" height="444" viewBox="0 0 626 444" fill="none" role="img" aria-label="布局2">
      <path d="M1 7h625v437H1z" fill="#000" />
      <path d="M.5 .5h621v439H.5z" fill="#fff" stroke="#000" />
      <path d="M42.500 15.500h537v409h-537z" stroke="#000" strokeWidth="3" />
      <path d="M95.500 56.500h431v327h-431z" stroke="#000" />
      <path d="M187.500 327.500h6v6h-6z" stroke="#000" />
      <g stroke="#0a0ad8">
        <path d="M54.500 407V363M57 410.500h44M51.500 407.500h6v6h-6z" />
        <path d="M51.500 371.500l3-10 3 10zM92.500 407.500l9 3-9 3z" />
        <path d="M102.500 369.500h6v6h-6zM104.500 376V335M102 372.500h41" />
        <path d="M102.500 341.500l2-8 2 8zM136.500 369.500l8 3-8 3z" />
      </g>
      <g fill="#0a0ad8" fontFamily="Liberation Sans" textAnchor="middle">
        <text x="55" y="355" fontSize="13">Y</text>
        <text x="113" y="415" fontSize="13">X</text>
        <text x="106" y="328" fontSize="11">Y</text>
        <text x="153" y="377" fontSize="11">X</text>
      </g>
    </svg>
  );
}

function Controls({ doc }) {
  const s = { fill: '#f4f4f4', stroke: '#333', strokeWidth: 1 };
  return (
    <>
      <BareButton type="button" aria-label="最小化"><svg width="13" height="12" viewBox="0 0 13 12"><path d="M.5 6.500h12v4H.5z" {...s} /></svg></BareButton>
      <BareButton type="button" aria-label="还原">
        <svg width="13" height="12" viewBox="0 0 13 12">
          {doc && <path d="M3.500 .5h9v8h-9z" {...s} />}
          <path fillRule="evenodd" d={doc ? 'M.5 2.500h9v9h-9zM3.500 5.500v3h3v-3z' : 'M.5 2.500h11v8H.5zM3.500 5.500v2h5v-2z'} {...s} />
        </svg>
      </BareButton>
      <BareButton type="button" aria-label="关闭"><svg width="13" height="12" viewBox="0 0 13 12"><path d="M1 1h3l2.500 3L9 1h3L8.500 6 12 11H9L6.500 8 4 11H1l3.500-5z" {...s} /></svg></BareButton>
    </>
  );
}

const NAV = ['M2 1v9M10 1L5 5.500 10 10z', 'M8 1L3 5.500 8 10z', 'M3 1l5 4.500L3 10z', 'M1 1l5 4.500L1 10zM9 1v9'];
const LEFT_TABS = ['材质', '模型中的光源', '高级渲染设置', '视觉样式管理...', '阳光特性'];
const RIGHT_TABS = ['图纸集管理器', '工具选项板 - 建筑', ''];
const TOGGLES = [['snap'], ['grid'], ['ortho'], ['polar', 1], ['osnap', 1], ['track', 1], ['ducs', 1], ['dyn', 1], ['lwt'], ['qp', 1]];

export default function App() {
  return (
    <>
      <GlobalStyle />
      <Window>
        <TitleBar>
          <AppButton type="button" aria-label="应用程序菜单">
            <svg width="38" height="38" viewBox="0 0 38 38">
              <path d="M4 33L9 5l7-2 10 23-7 5-3-4-7 1-1 4z" fill="#8f1219" />
              <text x="3" y="30" fontFamily="Liberation Sans" fontWeight="700" fontSize="32" fill="#d92a2f" stroke="#c01c24" strokeWidth="2">A</text>
              <path d="M10 5l6-2 4 10-5-4z" fill="#f3696b" opacity=".8" />
              <path d="M4 30l4-9 2 8-3 4z" fill="#f04a4e" opacity=".7" />
              <path d="M29 18h7l-3.500 4z" fill="#333" />
            </svg>
          </AppButton>
          <QuickAccess>
            <Quick name="new" label="新建" /><Quick name="open" label="打开" /><Quick name="save" label="保存" />
            <Quick name="undo" label="放弃" /><QuickButton type="button" $w={9} aria-label="放弃列表"><Arrow small /></QuickButton>
            <Quick name="redo" label="重做" /><QuickButton type="button" $w={9} aria-label="重做列表"><Arrow small /></QuickButton>
            <Quick name="print" label="打印" w={24} />
            <QuickButton type="button" $w={12} aria-label="自定义">
              <svg width="8" height="8" viewBox="0 0 8 8"><path d="M0 0h8v1.500H0zM0 3h8L4 7.500z" fill="#000" /></svg>
            </QuickButton>
          </QuickAccess>
          <Title><span>AutoCAD 2010</span><span>Drawing1.dwg</span></Title>
          <SearchBox>
            <QuickButton type="button" $w={13} aria-label="展开"><svg width="5" height="8" viewBox="0 0 5 8"><path d="M0 0l5 4-5 4z" fill="#000" /></svg></QuickButton>
            <SearchInput aria-label="搜索" defaultValue="mv" />
            <Quick name="find" label="搜索" w={22} />
            <QuickButton type="button" $w={8} aria-label="搜索选项"><Arrow small /></QuickButton>
            <Quick name="key" label="速博" w={24} /><Quick name="dish" label="通讯中心" w={23} /><Quick name="star" label="收藏夹" w={23} />
            <QuickButton type="button" $w={23} aria-label="帮助">
              <svg width="17" height="17" viewBox="0 0 17 17"><circle cx="8.500" cy="8.500" r="7.500" fill="#f2f2f2" stroke="#333" /><text x="8.500" y="13" textAnchor="middle" fontSize="12" fontWeight="700" fill="#333">?</text></svg>
            </QuickButton>
            <QuickButton type="button" $w={8} aria-label="帮助选项"><Arrow small /></QuickButton>
          </SearchBox>
          <WindowButtons><Controls /></WindowButtons>
        </TitleBar>

        <TabRow>
          {TABS.map((t, i) => <RibbonTab key={t} type="button" $active={i === 0}>{t}</RibbonTab>)}
          <RibbonTab type="button" aria-label="最小化功能区">
            <svg width="34" height="19" viewBox="0 0 34 19"><rect x="14" y="6" width="13" height="8" rx="2" fill="#f2f2f2" /><path d="M17 8.500h7L20.500 12z" fill="#333" /></svg>
          </RibbonTab>
        </TabRow>

        <RibbonPanels />

        <Workspace>
          <Dock>
            {LEFT_TABS.map((t) => <DockTab key={t} type="button" $h={102}><Grip /><DockText>{t}</DockText></DockTab>)}
          </Dock>
          <Main>
            <Canvas>
              <Paper />
              <DocButtons><Controls doc /></DocButtons>
            </Canvas>
            <LayoutBar>
              {NAV.map((d) => (
                <NavButton key={d} type="button" aria-label="切换布局">
                  <svg width="11" height="11" viewBox="0 0 11 11"><path d={d} fill="#555" stroke="#555" /></svg>
                </NavButton>
              ))}
              <LayoutTab type="button" $w={48}><span>模型</span></LayoutTab>
              <LayoutTab type="button" $w={48}><span>布局1</span></LayoutTab>
              <LayoutTab type="button" $w={54} $active><span>布局2</span></LayoutTab>
            </LayoutBar>
            <CommandArea>
              <CommandGrip><Grip as="div" /></CommandGrip>
              <CommandLog>
                <LogLine><Han>命令</Han>: *<Han>取消</Han>*</LogLine>
                <LogLine><Han>命令</Han>: _.MSPACE</LogLine>
                <Prompt><Han>命令</Han>: <input aria-label="命令" /></Prompt>
              </CommandLog>
            </CommandArea>
          </Main>
          <Dock $right>
            {RIGHT_TABS.map((t) => <DockTab key={t} type="button" $h={175} aria-label={t || '面板'}><Grip /><DockText>{t}</DockText></DockTab>)}
          </Dock>
        </Workspace>

        <StatusBar>
          <Coordinates>114.8762, 61.6523 , 0.0000</Coordinates>
          {TOGGLES.map(([n, on]) => <StatusButton key={n} type="button" $on={on} aria-label={n}><Icon name={n} /></StatusButton>)}
          <Spacer />
          <StatusButton type="button" $w={30}>模型</StatusButton>
          <StatusGroup $ml={1}>
            <StatusButton type="button" aria-label="模型"><Icon name="modelSpace" /></StatusButton>
            <StatusButton type="button" aria-label="布局"><Icon name="layouts" /></StatusButton>
          </StatusGroup>
          <StatusGroup $ml={16}>
            {['pan', 'zoomIcon', 'wheel', 'motion'].map((n) => <StatusButton key={n} type="button" aria-label={n}><Icon name={n} /></StatusButton>)}
          </StatusGroup>
          <StatusGroup $ml={36}>
            <StatusButton type="button" $w={14} aria-label="比例" />
            <StatusButton type="button" aria-label="注释比例"><Icon name="annoScale" /></StatusButton>
            <StatusButton type="button" $w={14} aria-label="注释可见性" />
            <StatusButton type="button" $w={24} aria-label="锁定"><Icon name="lock" /></StatusButton>
            <StatusButton type="button" $w={40}><Icon name="screen" />0.6</StatusButton>
          </StatusGroup>
        </StatusBar>
      </Window>

      <Badge>
        <svg width="46" height="24" viewBox="0 0 46 24">
          <path d="M0 11l8-1-3-4 7 2 1-6 5 5 4-7 4 6 5-5 3 6 6-5 1 6 5-2v18H4z" fill="#fff" />
          <text x="6" y="20" fontSize="10" fontWeight="700" fill="#c8101c">点我加速</text>
        </svg>
      </Badge>

      <Banner href="#">
        <svg width="98" height="84" viewBox="0 0 98 84">
          <defs><linearGradient id="tower" x1="0" y1="0" x2="1" y2="1"><stop offset="0" stopColor="#0f3f96" /><stop offset="1" stopColor="#3f7cc4" /></linearGradient></defs>
          <path d="M8 36C18 14 46 2 68 3c24 1 32 14 27 31C93 18 82 10 64 9 42 8 20 20 8 36z" fill="#93c225" />
          <path d="M97 34C96 58 66 80 34 80 8 80-4 66 4 42c0 18 12 27 32 27 30 0 52-15 61-35z" fill="#14479f" />
          <path d="M9 50l14-7v20l-14-6zM30 23l18-8v50H30zM57 37l15-6v22l-15 7z" fill="url(#tower)" />
          <path d="M24 42l4 3v19l-4-2zM49 15l19 10v6l-13 5v25l-6 3zM74 34l14 6-14 12z" fill="#d7dbe0" />
        </svg>
        <BannerText>
          <BannerName>土木工程网</BannerName>
          <BannerUrl>www.civilcn.com</BannerUrl>
        </BannerText>
      </Banner>
    </>
  );
}
